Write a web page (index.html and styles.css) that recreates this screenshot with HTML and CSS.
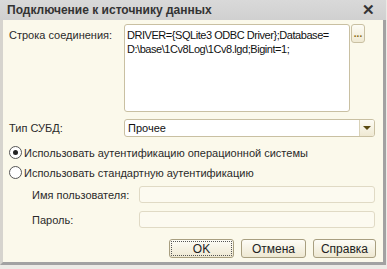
FILE: index.html
```html
<!DOCTYPE html>
<html>
<head>
<meta charset="utf-8">
<link rel="stylesheet" href="styles.css">
</head>
<body>
<div class="window">
  <div class="titlebar">
    <span class="title">Подключение к источнику данных</span>
    <span class="close">✕</span>
  </div>
  <div class="content">
    <div class="row row-conn">
      <label class="label">Строка соединения:</label>
      <div class="memo">DRIVER={SQLite3 ODBC Driver};Database=<br>D:\base\1Cv8Log\1Cv8.lgd;Bigint=1;</div>
      <div class="dots">...</div>
    </div>
    <div class="row row-type">
      <label class="label">Тип СУБД:</label>
      <div class="select">
        <span class="select-text">Прочее</span>
        <span class="select-btn"><span class="arrow"></span></span>
      </div>
    </div>
    <div class="radio-row">
      <span class="radio checked"></span>
      <span class="radio-text">Использовать аутентификацию операционной системы</span>
    </div>
    <div class="radio-row">
      <span class="radio"></span>
      <span class="radio-text">Использовать стандартную аутентификацию</span>
    </div>
    <div class="row row-sub">
      <label class="sublabel">Имя пользователя:</label>
      <div class="input"></div>
    </div>
    <div class="row row-sub row-pass">
      <label class="sublabel">Пароль:</label>
      <div class="input"></div>
    </div>
    <div class="buttons">
      <div class="btn btn-ok">OK</div>
      <div class="btn btn-cancel">Отмена</div>
      <div class="btn btn-help">Справка</div>
    </div>
  </div>
</div>
</body>
</html>
```

FILE: styles.css
```css
html, body {
  margin: 0;
  padding: 0;
}
body {
  width: 387px;
  height: 269px;
  background: #ecebe6;
  font-family: "Liberation Sans", Arial, sans-serif;
  font-size: 11px;
  color: #2a2a2a;
  overflow: hidden;
}
.window {
  width: 380px;
  height: 262px;
  border-left: 3px solid #d6d4ce;
  border-right: 3px solid #a2a2a2;
  border-bottom: 3px solid #a2a2a2;
  background: #fbf9eb;
  display: flex;
  flex-direction: column;
}
.titlebar {
  height: 20px;
  margin-left: -3px;
  margin-right: -3px;
  background: linear-gradient(#d9d9d9, #d0d0d0);
  display: flex;
  align-items: center;
  justify-content: space-between;
  padding: 0 11px 0 7px;
}
.title {
  font-weight: bold;
  font-size: 12px;
  color: #333;
}
.close {
  font-size: 15px;
  font-weight: bold;
  color: #333;
}
.content {
  padding: 4px 7px 0 6px;
  display: flex;
  flex-direction: column;
}
.row {
  display: flex;
  align-items: flex-start;
}
.label {
  width: 115px;
  flex: none;
}
.row-conn .label {
  padding-top: 5px;
}
.memo {
  width: 226px;
  background: #fff;
  border: 1px solid #c9c0a2;
  border-radius: 3px;
  padding: 3px 2px 0 2px;
  box-sizing: border-box;
  height: 88px;
  line-height: 14px;
  color: #111;
  white-space: nowrap;
  overflow: hidden;
  letter-spacing: -0.45px;
}
.dots {
  margin-left: 1px;
  width: 14px;
  height: 19px;
  box-sizing: border-box;
  border: 1px solid #c9c0a2;
  border-radius: 3px;
  background: linear-gradient(#fdfcf5, #efe9d2);
  color: #8a6a10;
  font-weight: bold;
  font-size: 10px;
  text-align: center;
  line-height: 17px;
}
.row-type {
  margin-top: 7px;
  align-items: center;
}
.select {
  width: 251px;
  height: 18px;
  box-sizing: border-box;
  border: 1px solid #c9c0a2;
  border-radius: 3px;
  background: #fff;
  display: flex;
  align-items: center;
}
.select-text {
  flex: 1;
  padding-left: 3px;
  color: #111;
}
.select-btn {
  width: 14px;
  height: 16px;
  border-left: 1px solid #d9d2b8;
  background: linear-gradient(#fdfcf5, #efe9d2);
  border-radius: 0 2px 2px 0;
  display: flex;
  align-items: center;
  justify-content: center;
}
.arrow {
  width: 0;
  height: 0;
  border-left: 4px solid transparent;
  border-right: 4px solid transparent;
  border-top: 4px solid #5a4a10;
}
.radio-row {
  display: flex;
  align-items: center;
  margin-top: 9px;
  height: 13px;
}
.radio-row + .radio-row {
  margin-top: 7px;
}
.radio {
  width: 11px;
  height: 11px;
  border: 1px solid #555;
  border-radius: 50%;
  background: #fff;
  box-sizing: content-box;
  margin-left: 0;
  margin-right: 2px;
  position: relative;
}
.radio.checked::after {
  content: "";
  position: absolute;
  left: 3px;
  top: 3px;
  width: 5px;
  height: 5px;
  border-radius: 50%;
  background: #222;
}
.row-sub {
  margin-top: 7px;
  align-items: center;
}
.row-pass {
  margin-top: 8px;
}
.sublabel {
  width: 107px;
  padding-left: 23px;
  flex: none;
}
.input {
  width: 236px;
  height: 17px;
  box-sizing: border-box;
  border: 1px solid #e0dac5;
  border-radius: 3px;
  background: #fcfaf0;
}
.buttons {
  display: flex;
  justify-content: flex-end;
  gap: 7px;
  margin-top: 11px;
}
.btn {
  height: 19px;
  box-sizing: border-box;
  border: 1px solid #a89f80;
  border-radius: 3px;
  background: linear-gradient(#fdfcf6, #eee8d2);
  display: flex;
  align-items: center;
  justify-content: center;
  font-size: 12px;
  color: #222;
}
.btn-ok {
  width: 65px;
  outline: 1px dotted #555;
  outline-offset: -3px;
}
.btn-cancel {
  width: 65px;
}
.btn-help {
  width: 63px;
}
```
